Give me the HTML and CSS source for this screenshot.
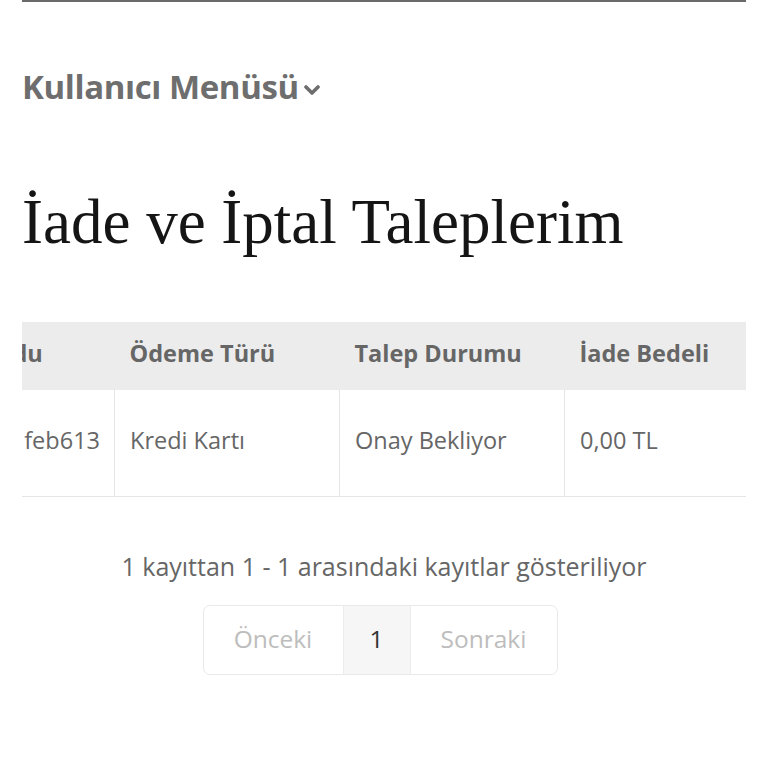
FILE: index.html
```html
<!DOCTYPE html>
<html lang="tr">
<head>
<meta charset="utf-8">
<title>İade ve İptal Taleplerim</title>
<link rel="stylesheet" href="styles.css">
</head>
<body>
<div class="page">
  <div class="topline"></div>
  <div class="menu">
    <span class="menu-text">Kullanıcı Menüsü</span>
    <svg class="chev" width="16" height="12" viewBox="0 0 16 12"><path d="M2 3 L8 9 L14 3" fill="none" stroke="#6e6e6e" stroke-width="3.6" stroke-linecap="round" stroke-linejoin="round"/></svg>
  </div>
  <h1 class="title">İade ve İptal Taleplerim</h1>
  <div class="table-wrap">
    <table class="tbl">
      <colgroup><col class="c"><col class="c"><col class="c"><col class="c"></colgroup>
      <thead>
        <tr><th class="first-h">Sipariş Kodu</th><th>Ödeme Türü</th><th>Talep Durumu</th><th>İade Bedeli</th></tr>
      </thead>
      <tbody>
        <tr><td class="first-d">62a9c4e1feb613</td><td>Kredi Kartı</td><td>Onay Bekliyor</td><td>0,00 TL</td></tr>
      </tbody>
    </table>
  </div>
  <p class="info">1 kayıttan 1 - 1 arasındaki kayıtlar gösteriliyor</p>
  <div class="pager-row">
    <div class="pager">
      <span class="pg prev">Önceki</span>
      <span class="pg cur">1</span>
      <span class="pg next">Sonraki</span>
    </div>
  </div>
</div>
</body>
</html>
```

FILE: styles.css
```css
* { box-sizing: border-box; }
html, body { margin: 0; padding: 0; background: #fff; }
body { font-family: "Open Sans", Lato, sans-serif; color: #666; }
.page { padding: 0 22px; display: flex; flex-direction: column; }
.topline { height: 2px; background: #6a6a6a; }
.menu { margin-top: 65px; height: 40px; display: flex; align-items: center; gap: 5px; }
.menu-text { font-size: 33px; line-height: 40px; font-weight: 700; color: #6e6e6e; letter-spacing: -0.4px; }
.chev { margin-top: 6px; }
.title { margin: 80px 0 0; font-family: "Liberation Serif", "Times New Roman", serif; font-weight: 400; font-size: 63px; line-height: 70px; color: #151515; }
.table-wrap { margin-top: 65px; width: 724px; overflow: hidden; }
.tbl { margin-left: -133px; width: 900px; table-layout: fixed; border-collapse: collapse; font-size: 23.5px; line-height: 30px; }
.tbl col.c { width: 225px; }
.tbl th { background: #ececec; color: #666; font-weight: 700; text-align: left; padding: 16px 15px 22px; white-space: nowrap; overflow: hidden; }
.tbl th.first-h { padding-left: 8px; padding-right: 5px; }
.tbl td { color: #666; padding: 35px 15px 41px; border-left: 1px solid #e6e6e6; border-bottom: 1px solid #e6e6e6; white-space: nowrap; overflow: hidden; }
.tbl td.first-d { text-align: right; padding-right: 14px; }
.info { margin: 53px 0 0; text-align: center; font-size: 25px; line-height: 32px; color: #666; }
.pager-row { margin-top: 23px; display: flex; justify-content: center; }
.pager { display: flex; height: 70px; border: 1px solid #e9e9e9; border-radius: 7px; overflow: hidden; margin-right: 8px; }
.pg { display: flex; align-items: center; justify-content: center; font-size: 24.5px; color: #bdbdbd; padding-bottom: 3px; }
.prev { width: 139px; }
.cur { width: 68px; background: #f6f6f6; color: #333; border-left: 1px solid #ececec; border-right: 1px solid #ececec; }
.next { width: 146px; }
```
